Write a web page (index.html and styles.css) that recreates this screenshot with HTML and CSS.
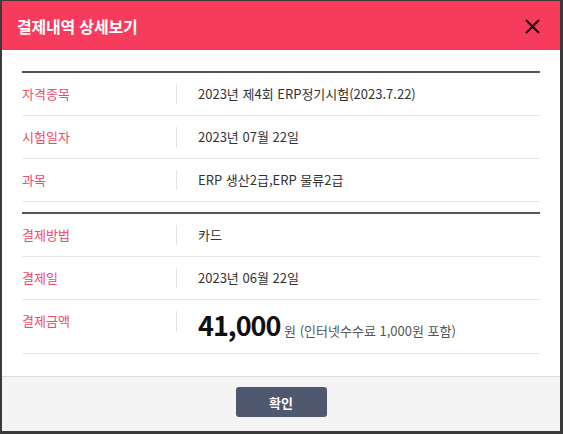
FILE: index.html
```html
<!DOCTYPE html>
<html lang="ko">
<head>
<meta charset="utf-8">
<title>결제내역 상세보기</title>
<link rel="stylesheet" href="styles.css">
</head>
<body>
<div class="modal">
  <div class="modal-head">
    <h1 class="modal-title">결제내역 상세보기</h1>
    <button class="close" aria-label="닫기">
      <svg width="15" height="15" viewBox="0 0 15 15"><path d="M1 1 L14 14 M14 1 L1 14" stroke="#111" stroke-width="2.2" fill="none"/></svg>
    </button>
  </div>
  <div class="modal-body">
    <div class="table">
      <div class="row"><div class="label">자격종목</div><div class="sep"></div><div class="value">2023년 제4회 ERP정기시험(2023.7.22)</div></div>
      <div class="row"><div class="label">시험일자</div><div class="sep"></div><div class="value">2023년 07월 22일</div></div>
      <div class="row"><div class="label">과목</div><div class="sep"></div><div class="value">ERP 생산2급,ERP 물류2급</div></div>
    </div>
    <div class="table">
      <div class="row"><div class="label">결제방법</div><div class="sep"></div><div class="value">카드</div></div>
      <div class="row"><div class="label">결제일</div><div class="sep"></div><div class="value">2023년 06월 22일</div></div>
      <div class="row row-amount"><div class="label">결제금액</div><div class="sep"></div><div class="value amount"><strong class="price">41,000</strong> <span class="note">원 (인터넷수수료 1,000원 포함)</span></div></div>
    </div>
  </div>
  <div class="modal-foot">
    <button class="btn">확인</button>
  </div>
</div>
</body>
</html>
```

FILE: styles.css
```css
html, body {
  margin: 0;
  padding: 0;
  background: #3a3a3a;
  height: 100%;
}
body {
  padding: 1px 3px 3px 2px;
  box-sizing: border-box;
  font-family: "Noto Sans CJK KR", "Noto Sans", sans-serif;
}
.modal {
  width: 558px;
  height: 430px;
  background: #fff;
  display: flex;
  flex-direction: column;
}
.modal-head {
  height: 49px;
  background: #f73b5c;
  display: flex;
  align-items: center;
  justify-content: space-between;
  padding: 0 20px 0 15px;
}
.modal-title {
  margin: 0;
  font-size: 16px;
  font-weight: 700;
  color: #fff;
  letter-spacing: -0.2px;
}
.close {
  border: 0;
  background: none;
  padding: 0;
  width: 15px;
  height: 15px;
  display: block;
  margin-top: 1px;
}
.close svg { display: block; }
.modal-body {
  flex: 1;
  padding: 21px 20px 0 20px;
}
.table {
  border-top: 2px solid #555;
  margin-bottom: 10px;
}
.row {
  display: flex;
  align-items: center;
  height: 42px;
  border-bottom: 1px solid #e6e6e6;
}
.label {
  width: 154px;
  font-size: 13px;
  line-height: 20px;
  color: #f2486a;
}
.sep {
  width: 1px;
  height: 20px;
  background: #e3e3e3;
}
.value {
  padding-left: 21px;
  font-size: 13px;
  line-height: 20px;
  color: #333;
}
.row-amount {
  height: 54px;
  align-items: flex-start;
  padding-top: 11px;
  box-sizing: border-box;
}
.amount {
  margin-top: -2px;
  line-height: 32px;
}
.price {
  font-size: 27px;
  font-weight: 700;
  color: #111;
  letter-spacing: -1px;
}
.note {
  font-size: 13px;
  color: #555;
}
.modal-foot {
  height: 55px;
  background: #f4f4f4;
  border-top: 1px solid #dcdcdc;
  display: flex;
  justify-content: center;
  align-items: flex-start;
  padding-top: 10px;
  box-sizing: border-box;
}
.btn {
  width: 91px;
  height: 30px;
  border: 0;
  border-radius: 3px;
  background: #4f586e;
  color: #fff;
  font-family: "Noto Sans CJK KR", "Noto Sans", sans-serif;
  font-size: 13px;
  font-weight: 700;
}
```
